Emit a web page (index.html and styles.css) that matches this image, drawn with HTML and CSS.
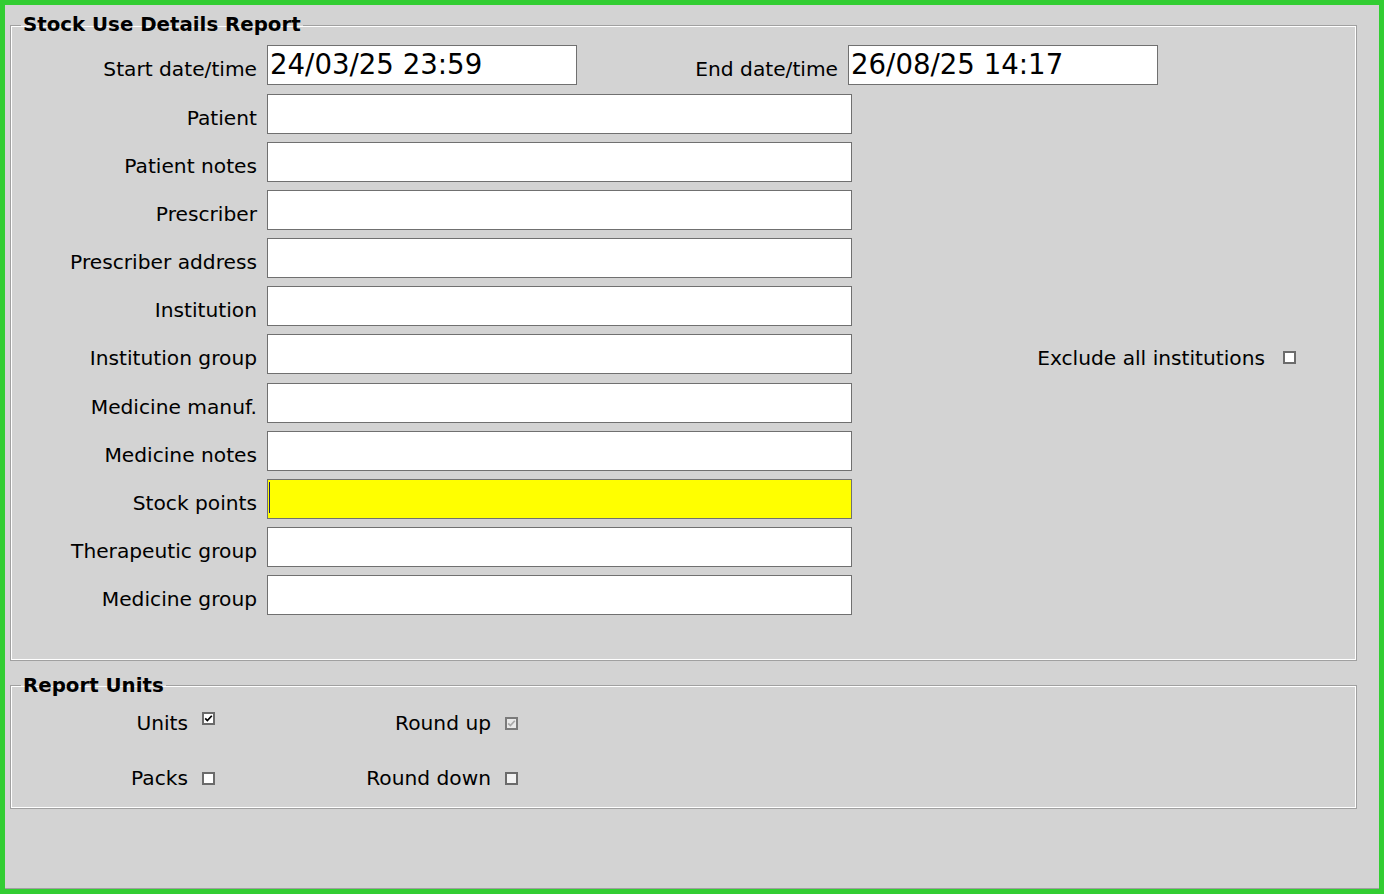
FILE: index.html
```html
<!DOCTYPE html>
<html lang="en">
<head>
<meta charset="utf-8">
<title>Stock Use Details Report</title>
<link rel="stylesheet" href="styles.css">
</head>
<body>
<div class="frame">
  <div class="page">
    <fieldset class="group main">
      <legend>Stock Use Details Report</legend>
      <div class="form">
        <div class="row">
          <span class="lbl">Start date/time</span>
          <div class="field date">24/03/25 23:59</div>
          <span class="lbl end-lbl">End date/time</span>
          <div class="field date">26/08/25 14:17</div>
        </div>
        <div class="row"><span class="lbl">Patient</span><div class="field wide"></div></div>
        <div class="row"><span class="lbl">Patient notes</span><div class="field wide"></div></div>
        <div class="row"><span class="lbl">Prescriber</span><div class="field wide"></div></div>
        <div class="row"><span class="lbl">Prescriber address</span><div class="field wide"></div></div>
        <div class="row"><span class="lbl">Institution</span><div class="field wide"></div></div>
        <div class="row">
          <span class="lbl">Institution group</span><div class="field wide"></div>
          <div class="aside"><span class="aside-text">Exclude all institutions</span><span class="cb"></span></div>
        </div>
        <div class="row"><span class="lbl">Medicine manuf.</span><div class="field wide"></div></div>
        <div class="row"><span class="lbl">Medicine notes</span><div class="field wide"></div></div>
        <div class="row"><span class="lbl">Stock points</span><div class="field wide active"><span class="caret"></span></div></div>
        <div class="row"><span class="lbl">Therapeutic group</span><div class="field wide"></div></div>
        <div class="row"><span class="lbl">Medicine group</span><div class="field wide"></div></div>
      </div>
    </fieldset>

    <fieldset class="group units">
      <legend>Report Units</legend>
      <div class="unit-grid">
        <div class="opt"><span class="opt-text">Units</span><span class="cb checked raised"><svg viewBox="0 0 9 9" width="9" height="9"><path d="M1.2 4.3 L3.4 6.6 L7.8 1.8" fill="none" stroke="#000" stroke-width="1.7"/></svg></span></div>
        <div class="opt"><span class="opt-text">Round up</span><span class="cb checked disabled"><svg viewBox="0 0 9 9" width="9" height="9"><path d="M1.2 4.3 L3.4 6.6 L7.8 1.8" fill="none" stroke="#a8a8a8" stroke-width="1.7"/></svg></span></div>
        <div class="opt"><span class="opt-text">Packs</span><span class="cb"></span></div>
        <div class="opt"><span class="opt-text">Round down</span><span class="cb light"></span></div>
      </div>
    </fieldset>
  </div>
</div>
</body>
</html>
```
FILE: styles.css
```css
html, body {
  margin: 0;
  padding: 0;
  background: #d3d3d3;
}

body {
  font-family: "DejaVu Sans", Verdana, sans-serif;
  color: #000;
}

.frame {
  width: 1384px;
  height: 894px;
  box-sizing: border-box;
  border: 5px solid #32cd32;
  display: flex;
  flex-direction: column;
  background: #d3d3d3;
}

.page {
  flex: 1;
  background: #d3d3d3;
  border-bottom: 1px solid #a0a0a0;
  padding: 8px 22px 0 5px;
}

.group {
  margin: 0;
  border: 1px solid #a0a0a0;
  box-shadow: inset 0 0 0 1px #ffffff;
  padding: 8px 10px 45px 10px;
  min-inline-size: 0;
}

.group legend {
  font-weight: bold;
  font-size: 19.8px;
  line-height: 24px;
  padding: 0 2px;
}

.form {
  display: flex;
  flex-direction: column;
  gap: 8.1px;
}

.row {
  display: flex;
  align-items: flex-start;
  height: 40px;
}

.row:first-child {
  margin-bottom: 0.9px;
}

.lbl {
  width: 236px;
  flex: none;
  text-align: right;
  font-size: 20.2px;
  line-height: 24px;
  margin-top: 12px;
  margin-right: 10px;
  white-space: nowrap;
}

.lbl.end-lbl {
  width: 261px;
}

.field {
  flex: none;
  box-sizing: border-box;
  height: 40px;
  background: #ffffff;
  border: 1px solid #707070;
}

.field.date {
  width: 310px;
  font-size: 27.6px;
  line-height: 38px;
  padding-left: 2px;
  white-space: nowrap;
}

.field.wide {
  width: 585px;
}

.field.active {
  background: #ffff00;
  display: flex;
  align-items: flex-start;
  padding-left: 1px;
}

.caret {
  width: 1px;
  height: 31px;
  margin-top: 2px;
  background: #1a1a6e;
}

.aside {
  margin-left: auto;
  margin-right: 50px;
  display: flex;
  align-items: flex-start;
  gap: 18px;
}

.aside-text {
  font-size: 20.2px;
  line-height: 24px;
  margin-top: 12px;
  white-space: nowrap;
}

.aside .cb {
  margin-top: 17px;
}

.cb {
  flex: none;
  width: 13px;
  height: 13px;
  box-sizing: border-box;
  border: 2px solid #6b6b6b;
  background: #ffffff;
  display: flex;
  align-items: center;
  justify-content: center;
  margin-top: 6px;
}

.cb svg {
  display: block;
}

.cb.raised {
  margin-top: 1px;
}

.cb.disabled {
  background: #e8e8e8;
  border-color: #7a7a7a;
}

.cb.light {
  background: #f2f2f2;
}

.units {
  margin-top: 13px;
  padding: 13px 10px 18px 10px;
}

.unit-grid {
  display: grid;
  grid-template-columns: 194px 303px;
  row-gap: 31px;
}

.opt {
  display: flex;
  justify-content: flex-end;
  align-items: flex-start;
  gap: 14px;
  height: 24px;
}

.opt-text {
  font-size: 20.2px;
  line-height: 24px;
  white-space: nowrap;
}
```
